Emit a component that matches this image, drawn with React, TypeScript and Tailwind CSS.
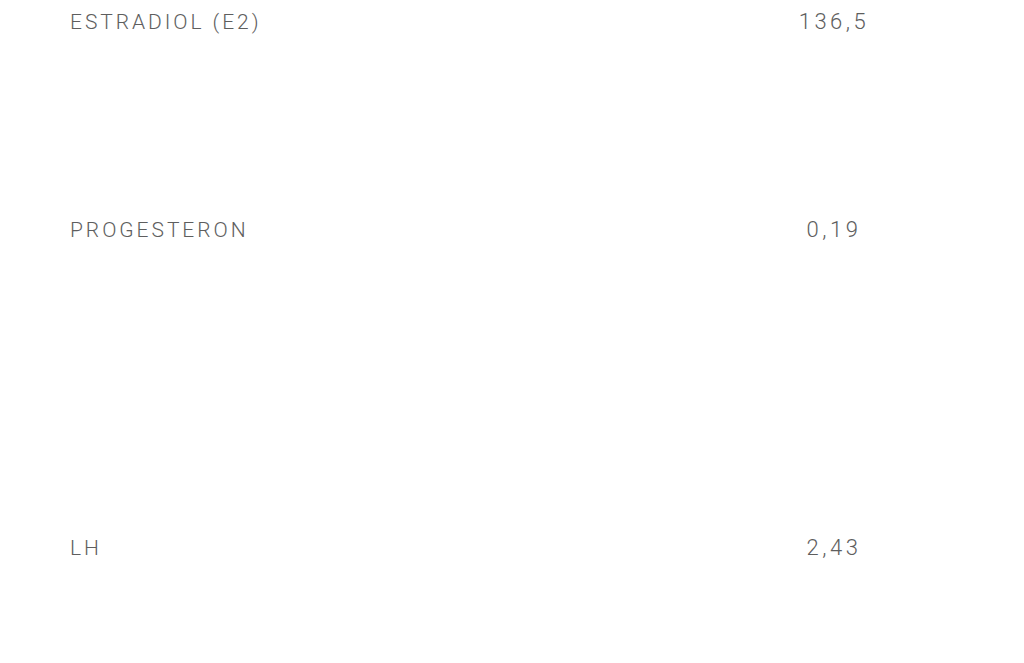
const rows = [
  { name: "ESTRADIOL (E2)", value: "136,5", h: "h-[208px]" },
  { name: "PROGESTERON", value: "0,19", h: "h-[318px]" },
  { name: "LH", value: "2,43", h: "h-[200px]" },
];

export default function App() {
  return (
    <div
      className="w-[1024px] h-[663px] overflow-hidden bg-white pt-[8px] pl-[70px] text-[#5e5e5e]"
      style={{ fontFamily: "Roboto, 'Liberation Sans', sans-serif" }}
    >
      {rows.map((row) => (
        <div key={row.name} className={`grid grid-cols-[662px_204px] ${row.h}`}>
          <span className="text-[21px] leading-[28px] font-light tracking-[0.14em]">
            {row.name}
          </span>
          <span className="text-[22px] leading-[28px] font-light tracking-[0.16em] text-center">
            {row.value}
          </span>
        </div>
      ))}
    </div>
  );
}
